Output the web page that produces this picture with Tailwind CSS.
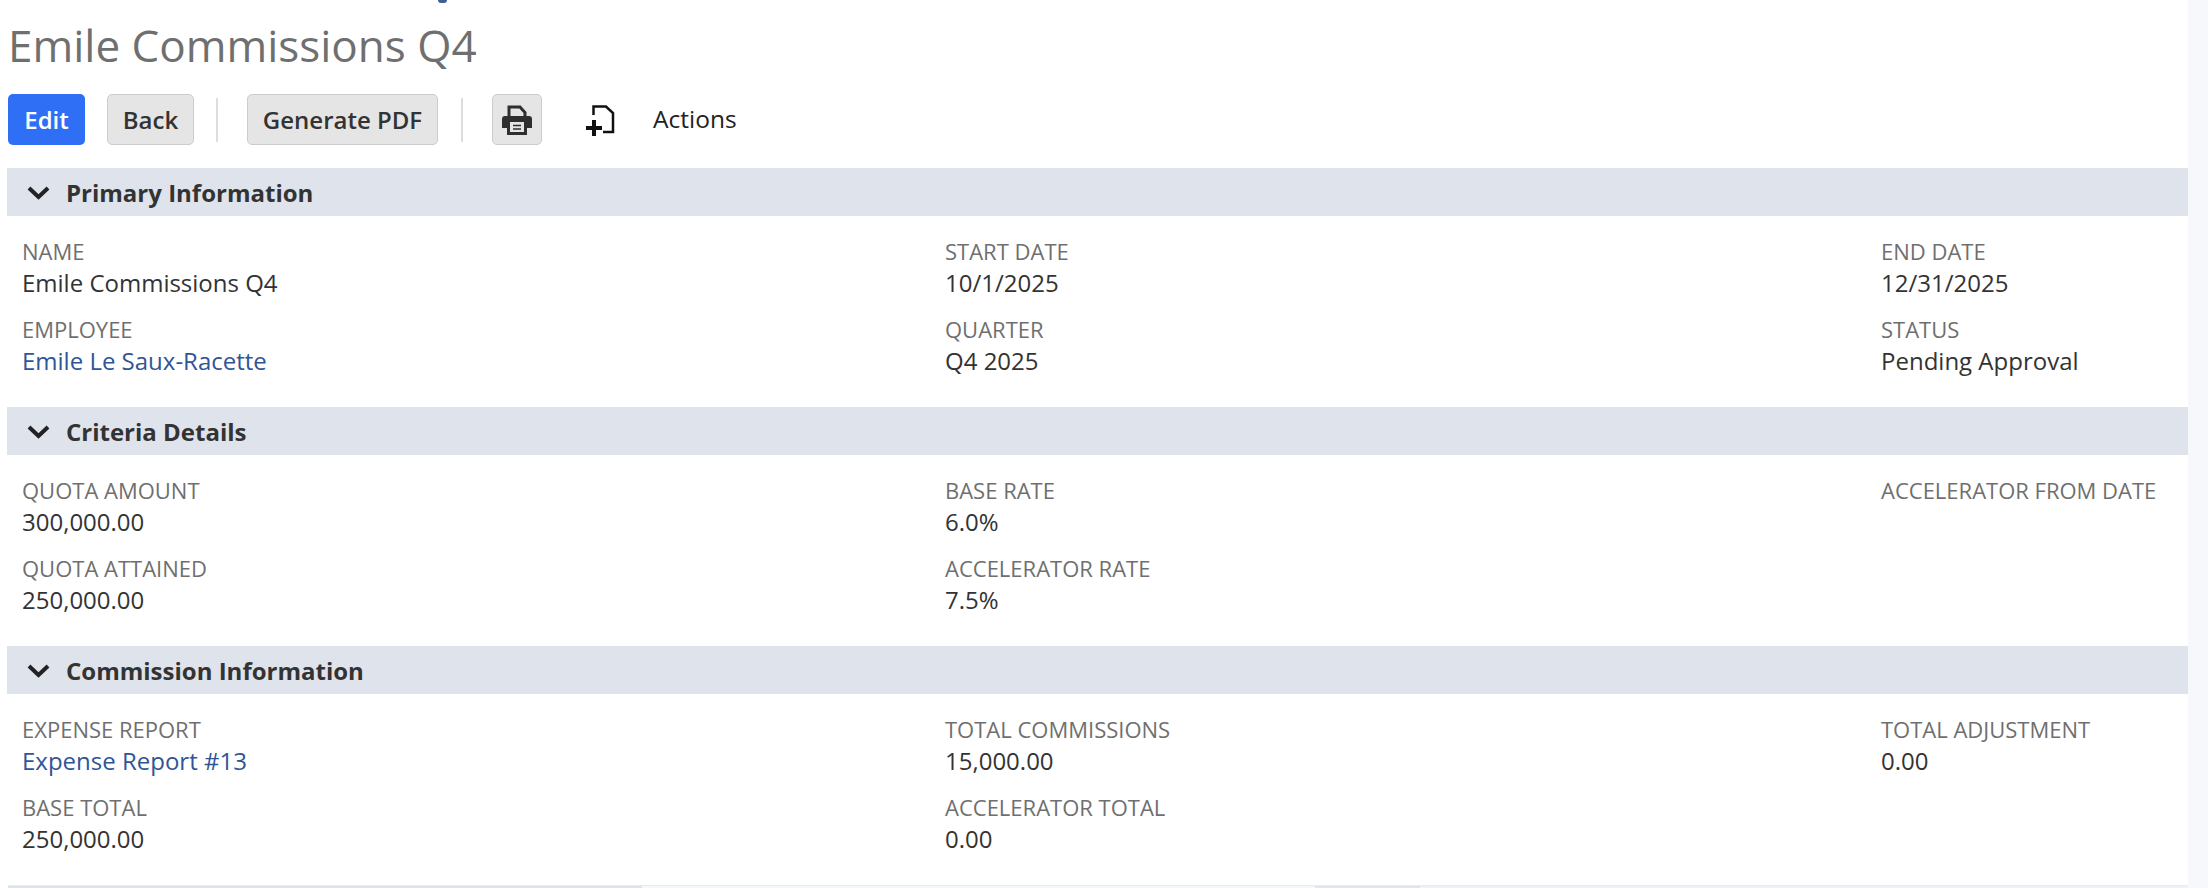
<!DOCTYPE html>
<html>
<head>
<meta charset="utf-8">
<script src="https://cdn.jsdelivr.net/npm/@tailwindcss/browser@4"></script>
</head>
<body class="bg-[#f6f8fc] font-['Open_Sans',sans-serif] overflow-hidden">
<div class="h-[888px] w-[2188px] bg-white flex flex-col relative">
  <div class="absolute left-[438px] top-0 w-[9px] h-[3px] rounded-b-full bg-[#3f5f95]"></div>
  <div class="pl-[8px] pt-[18px] h-[94px] text-[44px] leading-[54px] text-[#6f6f6f]">Emile Commissions Q4</div>

  <div class="pl-[8px] flex items-center h-[51px] text-[24px]">
    <button class="h-[51px] w-[77px] rounded-[5px] bg-[#2e6ff6] text-white font-semibold">Edit</button>
    <button class="ml-[22px] h-[51px] w-[87px] rounded-[5px] bg-[#e5e5e5] border border-[#cccccc] text-[#333333] font-semibold">Back</button>
    <div class="ml-[22px] w-[2px] h-[44px] bg-[#dddddd]"></div>
    <button class="ml-[29px] h-[51px] w-[191px] rounded-[5px] bg-[#e5e5e5] border border-[#cccccc] text-[#333333] font-semibold">Generate PDF</button>
    <div class="ml-[23px] w-[2px] h-[44px] bg-[#dddddd]"></div>
    <button class="ml-[29px] h-[51px] w-[50px] rounded-[5px] bg-[#e5e5e5] border border-[#cccccc] flex items-center justify-center">
      <svg width="30" height="30" viewBox="0 0 30 30"><path d="M7 12V2h11l5 5.500V12" fill="none" stroke="#2f2f2f" stroke-width="3"/><path d="M3 11h24a3 3 0 0 1 3 3v9h-5v7H5v-7H0v-9a3 3 0 0 1 3-3z" fill="#2f2f2f"/><rect x="8" y="17" width="14" height="10" fill="#e5e5e5"/><path d="M11 20.500h8M11 24h8" stroke="#2f2f2f" stroke-width="1.500"/></svg>
    </button>
    <svg class="ml-[44px]" width="30" height="32" viewBox="0 0 30 32" fill="none"><path d="M7.500 11V2.500H20L27 9V28H17" stroke="#111111" stroke-width="2.500"/><path d="M0 24H16M8 16V32" stroke="#111111" stroke-width="4"/></svg>
    <span class="ml-[37px] text-[24.500px] text-[#222222] font-medium">Actions</span>
  </div>

  <section class="mt-[23px] ml-[7px]">
    <div class="h-[48px] bg-[#dfe3ec] flex items-center pl-[19px] text-[24px] font-bold text-[#333333]">
      <svg class="mr-[15px]" width="25" height="15" viewBox="0 0 25 15" fill="none"><path d="M3 3l9.500 9L22 3" stroke="#222222" stroke-width="4"/></svg><span class="pt-[2px]">Primary Information</span></div>
    <div class="h-[191px] pt-[19px] pl-[15px] grid grid-cols-[923px_936px_1fr] grid-rows-[78px_78px] text-[24px] leading-[32px] text-[#333333]">
      <div><div class="text-[#6f6f6f] text-[22px]">NAME</div><div>Emile Commissions Q4</div></div>
      <div><div class="text-[#6f6f6f] text-[22px]">START DATE</div><div>10/1/2025</div></div>
      <div><div class="text-[#6f6f6f] text-[22px]">END DATE</div><div>12/31/2025</div></div>
      <div><div class="text-[#6f6f6f] text-[22px]">EMPLOYEE</div><div class="text-[#2f5597]">Emile Le Saux-Racette</div></div>
      <div><div class="text-[#6f6f6f] text-[22px]">QUARTER</div><div>Q4 2025</div></div>
      <div><div class="text-[#6f6f6f] text-[22px]">STATUS</div><div>Pending Approval</div></div>
    </div>
  </section>

  <section class="ml-[7px]">
    <div class="h-[48px] bg-[#dfe3ec] flex items-center pl-[19px] text-[24px] font-bold text-[#333333]">
      <svg class="mr-[15px]" width="25" height="15" viewBox="0 0 25 15" fill="none"><path d="M3 3l9.500 9L22 3" stroke="#222222" stroke-width="4"/></svg><span class="pt-[2px]">Criteria Details</span></div>
    <div class="h-[191px] pt-[19px] pl-[15px] grid grid-cols-[923px_936px_1fr] grid-rows-[78px_78px] text-[24px] leading-[32px] text-[#333333]">
      <div><div class="text-[#6f6f6f] text-[22px]">QUOTA AMOUNT</div><div>300,000.00</div></div>
      <div><div class="text-[#6f6f6f] text-[22px]">BASE RATE</div><div>6.0%</div></div>
      <div><div class="text-[#6f6f6f] text-[22px]">ACCELERATOR FROM DATE</div></div>
      <div><div class="text-[#6f6f6f] text-[22px]">QUOTA ATTAINED</div><div>250,000.00</div></div>
      <div><div class="text-[#6f6f6f] text-[22px]">ACCELERATOR RATE</div><div>7.5%</div></div>
    </div>
  </section>

  <section class="ml-[7px]">
    <div class="h-[48px] bg-[#dfe3ec] flex items-center pl-[19px] text-[24px] font-bold text-[#333333]">
      <svg class="mr-[15px]" width="25" height="15" viewBox="0 0 25 15" fill="none"><path d="M3 3l9.500 9L22 3" stroke="#222222" stroke-width="4"/></svg><span class="pt-[2px]">Commission Information</span></div>
    <div class="h-[191px] pt-[19px] pl-[15px] grid grid-cols-[923px_936px_1fr] grid-rows-[78px_78px] text-[24px] leading-[32px] text-[#333333]">
      <div><div class="text-[#6f6f6f] text-[22px]">EXPENSE REPORT</div><div class="text-[#2f5597]">Expense Report #13</div></div>
      <div><div class="text-[#6f6f6f] text-[22px]">TOTAL COMMISSIONS</div><div>15,000.00</div></div>
      <div><div class="text-[#6f6f6f] text-[22px]">TOTAL ADJUSTMENT</div><div>0.00</div></div>
      <div><div class="text-[#6f6f6f] text-[22px]">BASE TOTAL</div><div>250,000.00</div></div>
      <div><div class="text-[#6f6f6f] text-[22px]">ACCELERATOR TOTAL</div><div>0.00</div></div>
    </div>
  </section>

  <div class="absolute left-[8px] right-0 bottom-0 h-[3px] flex flex-col">
    <div class="h-[1px] bg-[#e8ebf1]"></div>
    <div class="h-[2px] flex">
      <div class="w-[634px] bg-[#dfe2e8]"></div>
      <div class="w-[673px] bg-[#f5f7fb]"></div>
      <div class="w-[105px] bg-[#e2e4e9]"></div>
      <div class="flex-1 bg-[#eef1f6]"></div>
    </div>
  </div>
</div>
</body>
</html>
